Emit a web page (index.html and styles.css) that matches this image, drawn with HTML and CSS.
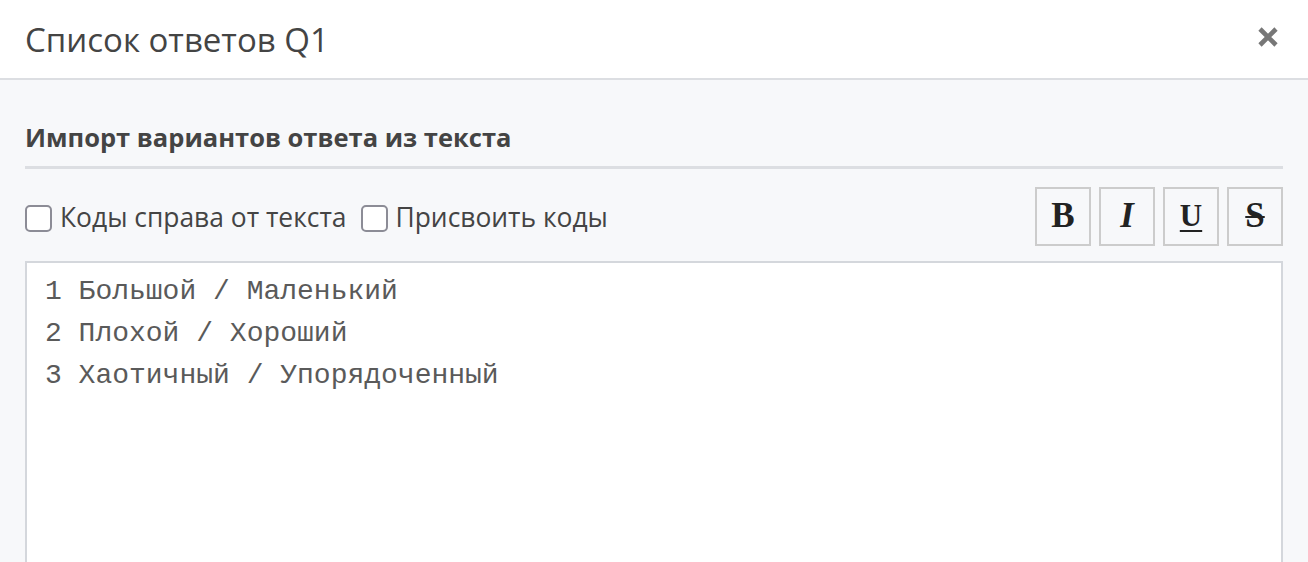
FILE: index.html
```html
<html lang="ru">
<head>
    <meta charset="UTF-8">
    <meta name="viewport" content="width=device-width, initial-scale=1.0">
    <title>Список ответов Q1</title>
    <link rel="stylesheet" href="styles.css">
</head>
<body>
<div class="modal">
    <div class="modal-header">
        <h2 class="modal-title">Список ответов Q1</h2>
        <button class="close-button" title="Закрыть">
            <svg width="22" height="22" viewBox="0 0 22 22"><path d="M3 3 L19 19 M19 3 L3 19" stroke="#777" stroke-width="4.6" stroke-linecap="butt"/></svg>
        </button>
    </div>
    <div class="modal-body">
        <h3 class="section-title">Импорт вариантов ответа из текста</h3>
        <div class="toolbar">
            <label class="check"><input type="checkbox"> Коды справа от текста</label>
            <label class="check"><input type="checkbox"> Присвоить коды</label>
            <div class="format-buttons">
                <button class="fmt fmt-b">B</button>
                <button class="fmt fmt-i">I</button>
                <button class="fmt fmt-u">U</button>
                <button class="fmt fmt-s">S</button>
            </div>
        </div>
        <textarea class="import-text">1 Большой / Маленький
2 Плохой / Хороший
3 Хаотичный / Упорядоченный</textarea>
    </div>
</div>
</body>
</html>
```

FILE: styles.css
```css
body {
    margin: 0;
    padding: 0;
    font-family: "Open Sans", Arial, sans-serif;
    color: #444;
    background-color: #f7f8fa;
    overflow: hidden;
}

.modal {
    width: 100%;
}

.modal-header {
    display: flex;
    align-items: center;
    justify-content: space-between;
    height: 78px;
    padding: 0 25px;
    background-color: #fff;
    border-bottom: 2px solid #dcdee2;
}

.modal-title {
    margin: 0;
    font-size: 33px;
    font-weight: normal;
    color: #444;
}

.close-button {
    background: none;
    border: none;
    padding: 0;
    margin-right: 4px;
    margin-top: -4px;
    cursor: pointer;
    display: flex;
}

.modal-body {
    padding: 40px 25px 0 25px;
}

.section-title {
    margin: 0;
    padding-bottom: 12px;
    font-size: 25.5px;
    font-weight: bold;
    color: #444;
    border-bottom: 3px solid #dcdee2;
}

.toolbar {
    display: flex;
    align-items: center;
    margin-top: 17px;
    height: 60px;
}

.check {
    display: flex;
    align-items: center;
    font-size: 26.4px;
    color: #444;
    margin-right: 14px;
    padding-top: 2px;
}

.check input {
    appearance: none;
    width: 27px;
    height: 27px;
    margin: 2px 8px 0 0;
    border: 2px solid #8c8c96;
    border-radius: 5px;
    background-color: #fff;
}

.format-buttons {
    display: flex;
    gap: 8px;
    margin-left: auto;
}

.fmt {
    width: 56px;
    height: 59px;
    border: 2px solid #cccccc;
    background-color: #f7f8fa;
    color: #222;
    font-family: "Liberation Serif", "Times New Roman", serif;
    font-size: 35px;
    font-weight: bold;
    padding: 0;
    cursor: pointer;
}

.fmt-i {
    font-style: italic;
}

.fmt-u {
    text-decoration: underline;
    text-decoration-thickness: 2px;
    text-underline-offset: 4px;
    font-size: 31px;
}

.fmt-s {
    text-decoration: line-through;
    text-decoration-thickness: 2px;
}

.import-text {
    display: block;
    box-sizing: border-box;
    width: 100%;
    height: 320px;
    margin-top: 15px;
    padding: 8px 18px;
    border: 2px solid #d4d7dc;
    background-color: #fff;
    font-family: "Liberation Mono", "Courier New", monospace;
    font-size: 28px;
    line-height: 42px;
    color: #5a5a5a;
    resize: none;
    outline: none;
}
```
